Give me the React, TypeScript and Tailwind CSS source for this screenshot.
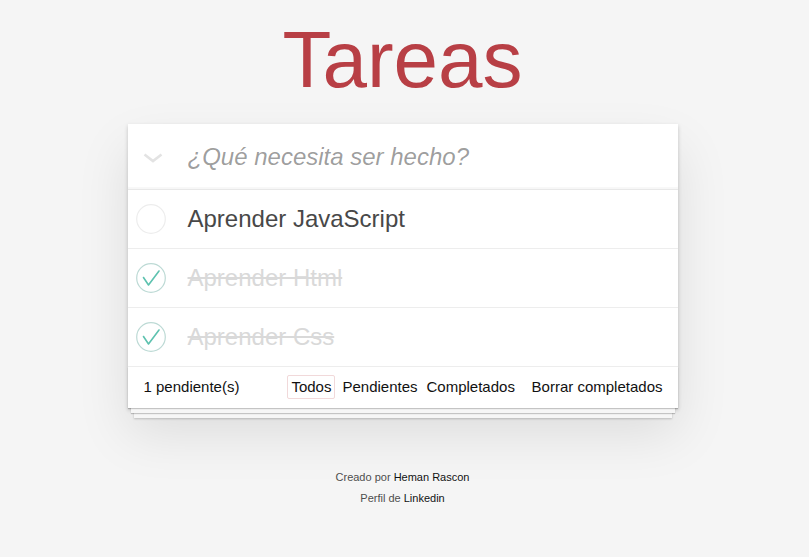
type Todo = {
  id: number;
  title: string;
  done: boolean;
};

const todos: Todo[] = [
  { id: 1, title: "Aprender JavaScript", done: false },
  { id: 2, title: "Aprender Html", done: true },
  { id: 3, title: "Aprender Css", done: true },
];

function Toggle({ done }: { done: boolean }) {
  return (
    <svg width="30" height="30" viewBox="0 0 30 30" fill="none">
      <circle cx="15" cy="15" r="14.3" stroke={done ? "#bddad5" : "#ededed"} strokeWidth="1.2" />
      {done && (
        <path d="M7.5 14.5 L12.5 22 L23 8" stroke="#5dc2af" strokeWidth="1.6" strokeLinecap="round" strokeLinejoin="round" />
      )}
    </svg>
  );
}

export default function App() {
  const pending = todos.filter((t) => !t.done).length;

  return (
    <div className="min-h-[557px] bg-[#f5f5f5] font-['Liberation_Sans',Arial,sans-serif] text-[#4d4d4d]">
      <div className="w-[805px] pt-5">
        <h1 className="text-center text-[80px] leading-none font-extralight text-[#b83f45] h-[104px]">
          Tareas
        </h1>

        <section className="w-[550px] mx-auto bg-white shadow-[0_2px_4px_0_rgba(0,0,0,0.2),0_25px_50px_0_rgba(0,0,0,0.1)]">
          <header className="h-[66px] flex items-center border-b border-[#e8e8e8] shadow-[inset_0_-2px_1px_rgba(0,0,0,0.03)]">
            <div className="w-[60px] flex justify-start pl-[15px] pt-[2px]">
              <svg width="20" height="10" viewBox="0 0 20 10" fill="none">
                <path d="M1.5 1.5 L10 8 L18.5 1.5" stroke="#e3e3e3" strokeWidth="2.6" />
              </svg>
            </div>
            <input
              className="flex-1 h-full pr-4 bg-transparent outline-none text-[24px] italic text-[#4d4d4d] placeholder:text-black/40"
              placeholder="¿Qué necesita ser hecho?"
            />
          </header>

          <ul>
            {todos.map((t) => (
              <li key={t.id} className="h-[59px] flex items-center border-b border-[#ededed]">
                <div className="w-[60px] pl-2 flex items-center">
                  <Toggle done={t.done} />
                </div>
                <span
                  className={`text-[24px] leading-[1.2] ${
                    t.done ? "text-[#d9d9d9] line-through" : "text-[#484848]"
                  }`}
                >
                  {t.title}
                </span>
              </li>
            ))}
          </ul>

          <footer className="relative h-[41px] flex items-center pl-4 pr-[15px] pb-[2px] text-[15px] leading-[18px] text-[#111] bg-white shadow-[0_1px_1px_rgba(0,0,0,0.2),0_8px_0_-3px_#f6f6f6,0_9px_1px_-3px_rgba(0,0,0,0.2),0_16px_0_-6px_#f6f6f6,0_17px_2px_-6px_rgba(0,0,0,0.2)]">
            <span>{pending} pendiente(s)</span>
            <div className="ml-[48px] flex items-center">
              <span className="px-[3px] py-[2px] border border-[rgba(184,63,69,0.2)] rounded-[2px]">Todos</span>
              <span className="ml-[7px]">Pendientes</span>
              <span className="ml-[9px]">Completados</span>
            </div>
            <span className="ml-auto">Borrar completados</span>
          </footer>
        </section>

        <footer className="mt-[64px] flex flex-col items-center gap-[10px] text-[11px] leading-none text-[#4d4d4d] [text-shadow:0_1px_0_rgba(255,255,255,0.5)]">
          <p>
            Creado por <span className="text-[#111]">Heman Rascon</span>
          </p>
          <p>
            Perfil de <span className="text-[#111]">Linkedin</span>
          </p>
        </footer>
      </div>
    </div>
  );
}
